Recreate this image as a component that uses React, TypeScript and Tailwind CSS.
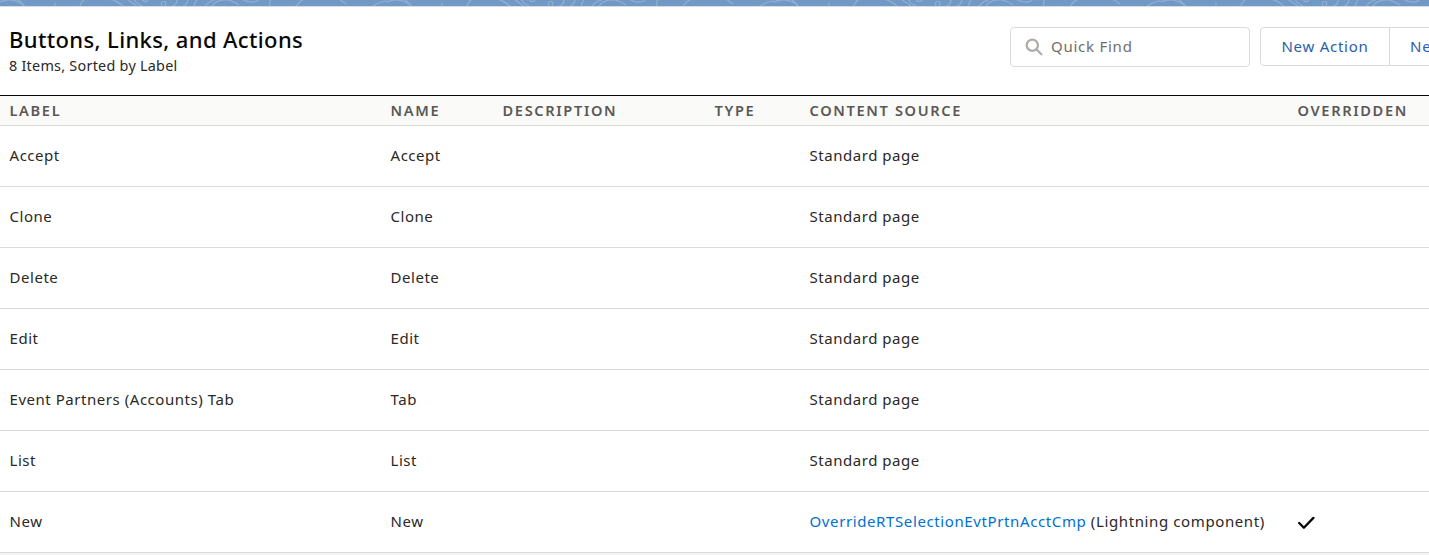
const GRID = 'grid grid-cols-[381px_112px_212px_95px_488px_131.5px] pl-[9.5px] w-[1429px]';

type Row = { label: string; name: string; component?: string; overridden?: boolean };

const COLUMNS = ['Label', 'Name', 'Description', 'Type', 'Content Source', 'Overridden'];

const ROWS: Row[] = [
  { label: 'Accept', name: 'Accept' },
  { label: 'Clone', name: 'Clone' },
  { label: 'Delete', name: 'Delete' },
  { label: 'Edit', name: 'Edit' },
  { label: 'Event Partners (Accounts) Tab', name: 'Tab' },
  { label: 'List', name: 'List' },
  { label: 'New', name: 'New', component: 'OverrideRTSelectionEvtPrtnAcctCmp', overridden: true },
];

function Banner() {
  return (
    <svg className="block h-[6px] w-full" aria-hidden="true">
      <defs>
        <pattern id="swirls" width="387" height="6" patternUnits="userSpaceOnUse">
          <g fill="none" stroke="#8fb0d4" strokeWidth="1.2">
            <path d="M0 2Q9-2 17 1.5T24 6" />
            <path d="M17-1Q21 2 24 6" />
            <path d="M80 6Q81 2 85-1" />
            <path d="M55 3V6" />
            <path d="M110-1Q118 1 123 6M127-1Q132 3 137 6M134-1Q137 5 142 5.5" />
            <path d="M142-1Q143 2 146 1.5Q148 1 148-1" />
            <path d="M162 6Q160 2 164 1.5Q167 2 165 6" />
            <path d="M172 6Q177 5 177 0" />
            <path d="M183 6Q188 4 188-1M194 6L197-1" />
            <path d="M205 6Q210 0 218-1M212 6Q217-1 228 0Q235 2 239 5" />
            <path d="M242-1Q250 4 257 1L259-1" />
            <path d="M270 6Q269 2 271-1M296 6Q300 1 304-1M339-1Q343 2 346 4" />
            <path d="M373 6Q381 1 387 1" />
          </g>
        </pattern>
      </defs>
      <rect width="100%" height="6" fill="#7099c5" />
      <rect width="100%" height="6" fill="url(#swirls)" />
    </svg>
  );
}

function SearchIcon() {
  return (
    <svg className="size-[18px] shrink-0" viewBox="0 0 18 18" fill="none" stroke="#b0adab" strokeWidth="2.3">
      <circle cx="7.3" cy="7.2" r="5.6" />
      <path d="M11.4 11.3L16.3 16.2" strokeLinecap="round" />
    </svg>
  );
}

function CheckIcon() {
  return (
    <svg className="mt-[1px] h-[14px] w-[18px]" viewBox="0 0 18 14" fill="none" stroke="#080707" strokeWidth="2.3">
      <path d="M1.2 7L5.9 11.7L15.4 1.9" strokeLinecap="round" strokeLinejoin="round" />
    </svg>
  );
}

export default function App() {
  return (
    <div className="h-[555px] overflow-hidden bg-[#f3f2f2] font-['Noto_Sans',sans-serif] text-[15px] tracking-[0.54px] whitespace-nowrap text-[#2b2826]">
      <Banner />
      <main className="border-t border-[#dddbda] bg-white">
        <header className="flex h-[88px] w-[1429px] items-start justify-between overflow-hidden pl-[9px]">
          <div className="pt-[16px]">
            <h1 className="text-[22px] leading-[32px] font-medium tracking-[0.37px] text-[#080707]">
              Buttons, Links, and Actions
            </h1>
            <p className="pt-[1px] text-[14.4px] leading-[20px] tracking-[0.25px]">8 Items, Sorted by Label</p>
          </div>
          <div className="flex w-[419px] items-start gap-[10px] pt-[20px]">
            <label className="flex h-[40px] w-[240px] shrink-0 items-center gap-[8px] rounded-[4px] border border-[#dddbda] pl-[14px]">
              <SearchIcon />
              <span className="pb-[2px] leading-[36px] tracking-[0.75px] text-[#706e6b]">Quick Find</span>
            </label>
            <div className="flex h-[39px] shrink-0 rounded-l-[4px] border border-[#dddbda] leading-[37px] tracking-[0.75px] text-[#2b5dab]">
              <button className="w-[129px] border-r border-[#dddbda]">New Action</button>
              <button className="w-[140px] pl-[20px] text-left">New Button or Link</button>
            </div>
          </div>
        </header>

        <div className={`${GRID} h-[31px] border-t border-b border-t-[#080707] border-b-[#dddbda] bg-[#fafaf9] text-[14.6px] leading-[29px] font-semibold tracking-[1.65px] text-[#5a5856] uppercase`}>
          {COLUMNS.map((column) => (
            <div key={column}>{column}</div>
          ))}
        </div>

        {ROWS.map((row) => (
          <div key={row.label} className={`${GRID} h-[61px] border-b border-[#dddbda] leading-[59px]`}>
            <div>{row.label}</div>
            <div>{row.name}</div>
            <div />
            <div />
            <div>
              {row.component ? (
                <>
                  <a className="tracking-[0.61px] text-[#0070d2]">{row.component}</a>
                  <span className="tracking-[0.61px]"> (Lightning component)</span>
                </>
              ) : (
                'Standard page'
              )}
            </div>
            <div className="flex items-center">{row.overridden && <CheckIcon />}</div>
          </div>
        ))}
      </main>
    </div>
  );
}
